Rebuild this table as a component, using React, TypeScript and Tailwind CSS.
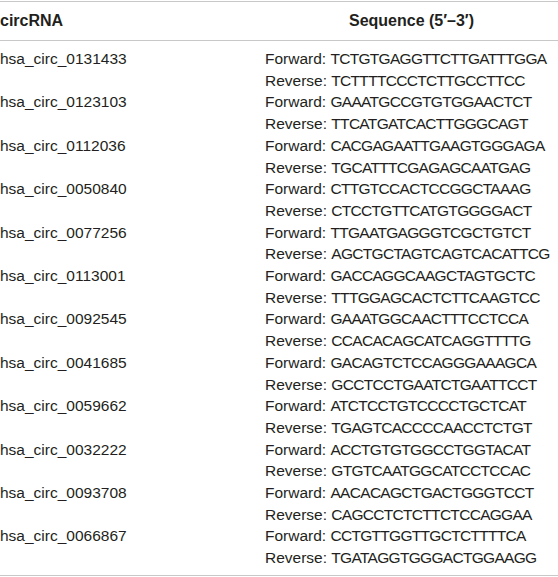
const rows = [
  ["hsa_circ_0131433", "TCTGTGAGGTTCTTGATTTGGA", "TCTTTTCCCTCTTGCCTTCC"],
  ["hsa_circ_0123103", "GAAATGCCGTGTGGAACTCT", "TTCATGATCACTTGGGCAGT"],
  ["hsa_circ_0112036", "CACGAGAATTGAAGTGGGAGA", "TGCATTTCGAGAGCAATGAG"],
  ["hsa_circ_0050840", "CTTGTCCACTCCGGCTAAAG", "CTCCTGTTCATGTGGGGACT"],
  ["hsa_circ_0077256", "TTGAATGAGGGTCGCTGTCT", "AGCTGCTAGTCAGTCACATTCG"],
  ["hsa_circ_0113001", "GACCAGGCAAGCTAGTGCTC", "TTTGGAGCACTCTTCAAGTCC"],
  ["hsa_circ_0092545", "GAAATGGCAACTTTCCTCCA", "CCACACAGCATCAGGTTTTG"],
  ["hsa_circ_0041685", "GACAGTCTCCAGGGAAAGCA", "GCCTCCTGAATCTGAATTCCT"],
  ["hsa_circ_0059662", "ATCTCCTGTCCCCTGCTCAT", "TGAGTCACCCCAACCTCTGT"],
  ["hsa_circ_0032222", "ACCTGTGTGGCCTGGTACAT", "GTGTCAATGGCATCCTCCAC"],
  ["hsa_circ_0093708", "AACACAGCTGACTGGGTCCT", "CAGCCTCTCTTCTCCAGGAA"],
  ["hsa_circ_0066867", "CCTGTTGGTTGCTCTTTTCA", "TGATAGGTGGGACTGGAAGG"],
];

export default function App() {
  return (
    <div className="w-[558px] h-[577px] bg-white pt-px font-['Liberation_Sans',Arial,sans-serif] text-[#231f20]">
      <div className="border-y border-[#c8c8c8] flex items-center h-[40px]">
        <div className="w-[265px] text-[16px] font-bold">circRNA</div>
        <div className="flex-1 text-center text-[16px] font-bold">Sequence (5′–3′)</div>
      </div>
      <div className="border-b border-[#c8c8c8] pt-[7px] pb-[6px] text-[15.5px] leading-[21.7px] whitespace-nowrap">
        {rows.map(([name, fwd, rev]) => (
          <div key={name} className="flex">
            <div className="w-[265px]">{name}</div>
            <div className="flex-1 flex flex-col">
              <span>
                Forward: <span className="tracking-[-0.7px]">{fwd}</span>
              </span>
              <span>
                Reverse: <span className="tracking-[-0.7px]">{rev}</span>
              </span>
            </div>
          </div>
        ))}
      </div>
    </div>
  );
}
